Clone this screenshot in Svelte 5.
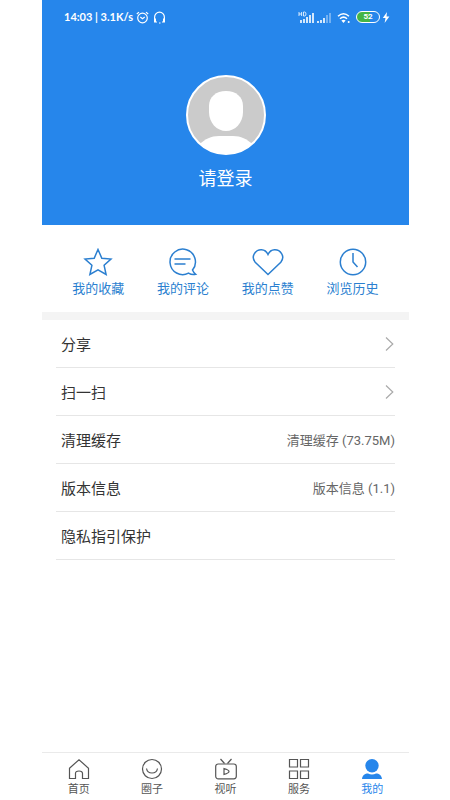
<script lang="ts">
	const actions = [
		{ icon: 'star', label: '我的收藏' },
		{ icon: 'comment', label: '我的评论' },
		{ icon: 'heart', label: '我的点赞' },
		{ icon: 'clock', label: '浏览历史' }
	];

	const rows = [
		{ label: '分享', arrow: true },
		{ label: '扫一扫', arrow: true },
		{ label: '清理缓存', value: '清理缓存 (73.75M)' },
		{ label: '版本信息', value: '版本信息 (1.1)' },
		{ label: '隐私指引保护' }
	];

	const tabs = [
		{ icon: 'home', label: '首页' },
		{ icon: 'circle', label: '圈子' },
		{ icon: 'tv', label: '视听' },
		{ icon: 'grid', label: '服务' },
		{ icon: 'me', label: '我的' }
	];

	let current = $state('me');
</script>

<div class="phone">
	<header>
		<div class="status">
			<span class="time">14:03 | 3.1K/s</span>
			<svg class="alarm" width="13" height="13" viewBox="0 0 13 13">
				<circle cx="6.5" cy="7" r="4.8" />
				<path d="M4.3 6l2.2 1.7L8.7 6M.8 3L3 1.1M12.2 3L10 1.1" />
			</svg>
			<svg width="13" height="13" viewBox="0 0 13 13">
				<path d="M4 11H1.6V6.2a4.9 5 0 0 1 9.800 0V11H9M2.400 7.500v3M10.600 7.500v3" />
				<path d="M6 12h1.500" />
			</svg>
			<span class="space"></span>
			<svg class="bars" width="16" height="13" viewBox="0 0 16 13">
				<path class="thin" d="M1 1v4M3.6 1v4M1 3h2.6M5.5 1v4h1q1.5 0 1.5-2t-1.5-2z" />
				<path d="M3 12V9M6 12V8M9 12V6M12 12V4M15 12V2" />
			</svg>
			<svg class="bars second" width="14" height="13" viewBox="0 0 14 13">
				<path d="M1 12v-2M4 12V9M7 12V7" />
				<path class="faint" d="M10 12V4M13 12V2" />
			</svg>
			<svg class="wifi" width="14" height="13" viewBox="0 0 14 13">
				<path d="M1 5.2q5.5-5 11 0M3 7.7q3.5-3.2 7 0" />
				<path class="solid" d="M6.5 12L4.4 9.6q2.1-1.6 4.2 0z" />
				<circle class="solid" cx="11.7" cy="11" r="1" />
			</svg>
			<span class="battery">52</span>
			<svg width="8" height="11" viewBox="0 0 8 11">
				<path class="solid" d="M5 0L.8 6h2.7L2.6 11 7.4 4.6H4.5z" />
			</svg>
		</div>
		<button class="login">
			<svg width="80" height="80" viewBox="0 0 80 80">
				<defs>
					<clipPath id="face"><circle cx="40" cy="40" r="39" /></clipPath>
				</defs>
				<circle cx="40" cy="40" r="39" fill="#cbcbcb" />
				<g clip-path="url(#face)" fill="#fff">
					<path d="M40 16c10 0 17 6 17 15v6c0 11-8 19-17 19s-17-8-17-19v-6c0-9 7-15 17-15z" />
					<path d="M14 69c5-5 11-8 19-8h14c8 0 14 3 19 8v11H14z" />
				</g>
				<circle cx="40" cy="40" r="39" fill="none" stroke="#fff" stroke-width="2" />
			</svg>
			<span>请登录</span>
		</button>
	</header>

	<nav class="actions">
		{#each actions as action}
			<button>
				<svg width="32" height="28" viewBox="0 0 32 28">
					{#if action.icon === 'star'}
						<path d="M16 1.5l3.8 8.7 9.2.9-6.9 6.2 2 9.2-8.1-4.7-8.1 4.7 2-9.2L3 11.1l9.2-.9z" />
					{:else if action.icon === 'comment'}
						<path d="M25.5 22A12.7 12.7 0 1 0 21.5 25.2Q25 27.3 28.7 26.3Q26.5 24.5 25.5 22z" />
						<path d="M7.5 11h16M7.5 16h11" />
					{:else if action.icon === 'heart'}
						<path d="M16 26.5L3.2 14.2C-1.8 8 4 1.5 9.5 1.8c3 .1 5.2 1.9 6.5 4.7 1.3-2.8 3.5-4.6 6.5-4.7C28 1.5 33.8 8 28.8 14.2z" />
					{:else}
						<circle cx="16" cy="14" r="12.7" />
						<path d="M16 5v9l4.5 5" />
					{/if}
				</svg>
				<span>{action.label}</span>
			</button>
		{/each}
	</nav>

	<ul>
		{#each rows as row}
			<li>
				<button>
					<span>{row.label}</span>
					{#if row.arrow}
						<svg width="10" height="16" viewBox="0 0 10 16"><path d="M1 1.5L7.8 8 1 14.5" /></svg>
					{/if}
					{#if row.value}
						<span class="value">{row.value}</span>
					{/if}
				</button>
			</li>
		{/each}
	</ul>

	<nav class="tabs">
		{#each tabs as tab}
			<button class:active={current === tab.icon} onclick={() => (current = tab.icon)}>
				<svg width="24" height="22" viewBox="0 0 24 22">
					{#if tab.icon === 'home'}
						<path d="M2.5 10.2L12 1.7l9.5 8.5v10.3h-6v-5.2q0-2.3-3.5-2.3t-3.5 2.3v5.2h-6z" />
					{:else if tab.icon === 'circle'}
						<circle cx="12" cy="11" r="9.5" />
						<path d="M6.5 10.5c1 6 10 6 11 0" />
					{:else if tab.icon === 'tv'}
						<rect x="1.7" y="6" width="20.6" height="14.8" rx="2.5" />
						<path d="M6.5 1l4 4.5M17.5 1l-4 4.5M10 10.5v6q5-1.5 5-3T10 10.5z" />
					{:else if tab.icon === 'grid'}
						<path d="M2.500 1.500h8V9h-8zM13.500 1.500h8V9h-8zM2.500 13h8v7.500h-8zM13.500 13h8v7.500h-8z" />
					{:else}
						<circle class="solid" cx="12" cy="7.7" r="6.7" />
						<path class="solid" d="M2 21c.5-4 3-5.500 6-5.500 2.500 1.200 5.500 1.200 8 0 3 0 5.500 1.500 6 5.500z" />
					{/if}
				</svg>
				<span>{tab.label}</span>
			</button>
		{/each}
	</nav>
</div>

<style>
	:global(body) {
		background: #fff;
	}
	.phone {
		box-sizing: border-box;
		min-height: 100vh;
		margin: 0 41px 0 42px;
		display: flex;
		flex-direction: column;
		font-family: Roboto, "Noto Sans CJK SC", sans-serif;
	}
	button {
		border: none;
		background: none;
		padding: 0;
		margin: 0;
		font: inherit;
		color: inherit;
		cursor: pointer;
	}
	svg {
		display: block;
		flex: none;
		fill: none;
		stroke: currentColor;
		stroke-width: 1.2;
	}
	.solid {
		fill: currentColor;
		stroke: none;
	}
	header {
		background: #2686eb;
		color: #fff;
		padding-bottom: 33px;
	}
	.status {
		display: flex;
		align-items: center;
		height: 34px;
		padding: 0 19px 0 22px;
	}
	.time {
		font: 700 11px/16px Lato, sans-serif;
		white-space: nowrap;
	}
	.alarm {
		margin: 0 4px 0 3px;
	}
	.space {
		flex: 1;
	}
	.bars {
		stroke-width: 1.6;
	}
	.thin {
		stroke-width: 0.8;
	}
	.faint {
		opacity: 0.45;
	}
	.second {
		margin-left: 3px;
	}
	.wifi {
		margin: 0 5px 0 6px;
		stroke-width: 1.5;
	}
	.battery {
		box-sizing: border-box;
		width: 24px;
		height: 12px;
		margin-right: 2px;
		border: 1px solid #fff;
		border-radius: 6px;
		background: linear-gradient(90deg, #45b545 60%, #2686eb 60%);
		font: 700 8px/10px Roboto, sans-serif;
		text-align: center;
	}
	.login {
		display: flex;
		flex-direction: column;
		align-items: center;
		gap: 11px;
		margin: 41px auto 0;
		font-size: 18px;
		line-height: 26px;
	}
	.login svg {
		stroke: none;
	}
	.actions {
		display: flex;
		padding: 23px 14px 13px;
		border-bottom: 8px solid #f4f4f4;
		color: #2b7fd0;
	}
	.actions button {
		flex: 1;
		display: flex;
		flex-direction: column;
		align-items: center;
		gap: 3px;
		font-size: 13px;
		line-height: 20px;
	}
	.actions svg {
		stroke-width: 1.5;
	}
	ul {
		flex: 1;
		list-style: none;
		margin: 0;
		padding: 0 14px;
	}
	li {
		border-bottom: 1px solid #e6e6e6;
	}
	li button {
		display: flex;
		align-items: center;
		justify-content: space-between;
		width: 100%;
		height: 47px;
		padding: 0 0 0 5px;
		color: #333;
		font-size: 15px;
	}
	li svg {
		color: #aaa;
	}
	.value {
		color: #666;
		font-size: 13px;
	}
	.tabs {
		display: flex;
		border-top: 1px solid #eaeaea;
		padding: 5px 0 2px;
		color: #555;
	}
	.tabs button {
		flex: 1;
		display: flex;
		flex-direction: column;
		align-items: center;
		gap: 2px;
		font-size: 11px;
		line-height: 16px;
	}
	.tabs .active {
		color: #2686eb;
	}
</style>
